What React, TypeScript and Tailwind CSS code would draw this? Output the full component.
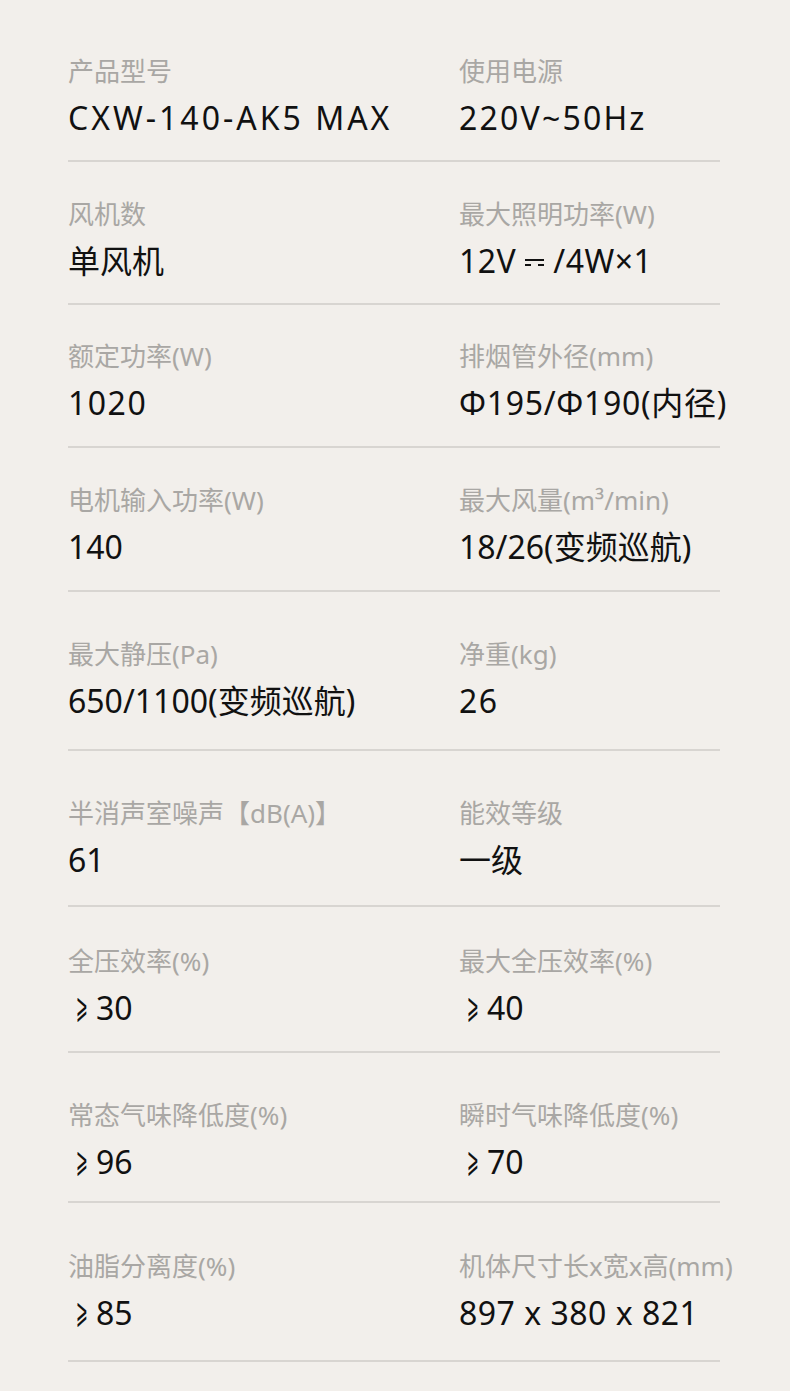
import React from "react";

interface SpecRow {
  left: [string, React.ReactNode];
  right: [string, React.ReactNode];
  pt: string;
  pb: string;
}

// slanted "greater or equal" drawn narrow like the reference
const Gte: React.FC = () => (
  <span
    className="inline-block w-[22px] ml-[1px] mr-[5px] text-center text-[35px] leading-none font-light scale-x-[0.4] -translate-y-[2px]"
    style={{ fontFamily: '"DejaVu Sans", sans-serif' }}
  >
    ⩾
  </span>
);

// DC symbol: solid line over dashed line
const Dc: React.FC = () => (
  <span className="inline-flex flex-col gap-[3px] w-[19px] mx-[9px] align-middle -translate-y-[2px]">
    <span className="block h-[2px] bg-[#111111]" />
    <span className="block h-0 border-t-2 border-dashed border-[#111111]" />
  </span>
);

const rows: SpecRow[] = [
  {
    left: ["产品型号", <span className="tracking-[3px]">CXW-140-AK5 MAX</span>],
    right: ["使用电源", <span className="tracking-[2.2px]">220V~50Hz</span>],
    pt: "pt-[55px]",
    pb: "pb-[20px]",
  },
  {
    left: ["风机数", "单风机"],
    right: [
      "最大照明功率(W)",
      <span className="tracking-[0.5px]">
        12V<Dc />/4W×1
      </span>,
    ],
    pt: "pt-[36px]",
    pb: "pb-[20px]",
  },
  {
    left: ["额定功率(W)", <span className="tracking-[1.5px]">1020</span>],
    right: ["排烟管外径(mm)", <span className="tracking-[0.7px]">Φ195/Φ190(内径)</span>],
    pt: "pt-[35px]",
    pb: "pb-[21px]",
  },
  { left: ["电机输入功率(W)", "140"], right: ["最大风量(m³/min)", "18/26(变频巡航)"], pt: "pt-[36px]", pb: "pb-[21px]" },
  {
    left: ["最大静压(Pa)", "650/1100(变频巡航)"],
    right: ["净重(kg)", <span className="tracking-[1.5px]">26</span>],
    pt: "pt-[46px]",
    pb: "pb-[26px]",
  },
  { left: ["半消声室噪声【dB(A)】", "61"], right: ["能效等级", "一级"], pt: "pt-[46px]", pb: "pb-[23px]" },
  {
    left: ["全压效率(%)", <><Gte />30</>],
    right: ["最大全压效率(%)", <><Gte />40</>],
    pt: "pt-[38px]",
    pb: "pb-[21px]",
  },
  {
    left: ["常态气味降低度(%)", <><Gte />96</>],
    right: ["瞬时气味降低度(%)", <><Gte />70</>],
    pt: "pt-[46px]",
    pb: "pb-[17px]",
  },
  {
    left: ["油脂分离度(%)", <><Gte />85</>],
    right: ["机体尺寸长x宽x高(mm)", <span className="tracking-[0.5px]">897 x 380 x 821</span>],
    pt: "pt-[47px]",
    pb: "pb-[25px]",
  },
];

const Cell: React.FC<{ label: string; value: React.ReactNode }> = ({ label, value }) => (
  <div className="flex flex-col gap-[9px]">
    <div className="text-[26px] leading-[32px] text-[#a9a7a4] whitespace-nowrap">{label}</div>
    <div className="h-[44px] text-[32px] leading-[44px] text-[#111111] whitespace-nowrap">{value}</div>
  </div>
);

export default function App() {
  return (
    <div
      className="w-[790px] h-[1391px] bg-[#f2efeb] overflow-hidden"
      style={{ fontFamily: '"Noto Sans", "Noto Sans CJK SC", sans-serif' }}
    >
      <div className="ml-[68px] w-[652px]">
        {rows.map((r, i) => (
          <div key={i}>
            <div className={`grid grid-cols-[391px_1fr] ${r.pt} ${r.pb}`}>
              <Cell label={r.left[0]} value={r.left[1]} />
              <Cell label={r.right[0]} value={r.right[1]} />
            </div>
            <div className="h-[2px] bg-[#d8d5d1]" />
          </div>
        ))}
      </div>
    </div>
  );
}
